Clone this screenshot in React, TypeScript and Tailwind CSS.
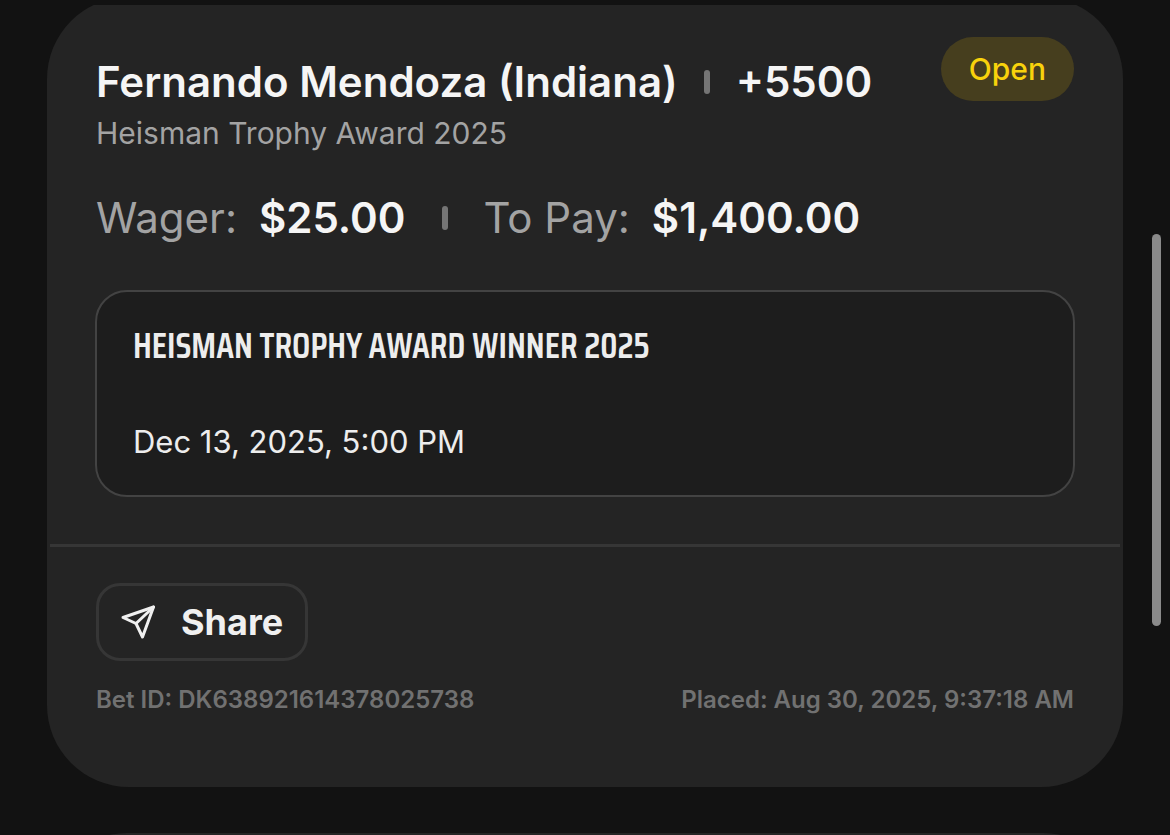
import React, {FC} from "react";

interface Bet {
    selection: string
    odds: string
    market: string
    status: string
    wager: string
    payout: string
    event: string
    startsAt: string
    id: string
    placedAt: string
}

interface BetCardProps {
    bet: Bet
}

const bet: Bet = {
    selection: "Fernando Mendoza (Indiana)",
    odds: "+5500",
    market: "Heisman Trophy Award 2025",
    status: "Open",
    wager: "$25.00",
    payout: "$1,400.00",
    event: "Heisman Trophy Award Winner 2025",
    startsAt: "Dec 13, 2025, 5:00 PM",
    id: "DK638921614378025738",
    placedAt: "Aug 30, 2025, 9:37:18 AM"
}

const Separator: FC = () => (
    <span className="h-6 w-1.5 shrink-0 rounded-sm bg-[#757575]" />
)

const ShareIcon: FC = () => (
    <svg className="h-9 w-9" viewBox="0 0 36 36" fill="none" stroke="currentColor" strokeWidth="3" strokeLinejoin="round" strokeLinecap="round" aria-hidden="true">
        <path d="M32.5 3 2 13.5 15 19.5 21.5 33Z" />
        <path d="M32.5 3 15 19.5" />
    </svg>
)

const BetCard: FC<BetCardProps> = ({bet}) => {
    return (
        <article className="-mt-2 rounded-[82px] bg-[#242424] pt-10 pb-[72px]">
            <div className="px-12">
                <header className="flex items-start justify-between px-px">
                    <div className="pt-5">
                        <div className="flex items-center gap-[26px] text-[42px] leading-[50px] font-semibold text-[#f5f5f5]">
                            <h1>{bet.selection}</h1>
                            <Separator />
                            <span>{bet.odds}</span>
                        </div>
                        <h2 className="mt-2 text-[30px] leading-9 text-[#a3a3a3]">{bet.market}</h2>
                    </div>
                    <span className="rounded-full bg-[#463e1e] px-7 py-3.5 text-[30px] leading-9 font-medium text-[#f8d20c]">
                        {bet.status}
                    </span>
                </header>
                <div className="mt-[42px] flex items-center gap-9 px-px text-[42px] leading-[50px]">
                    <p className="flex gap-[22px]">
                        <span className="text-[#a3a3a3]">Wager:</span>
                        <span className="font-semibold text-[#f5f5f5]">{bet.wager}</span>
                    </p>
                    <Separator />
                    <p className="flex gap-[22px]">
                        <span className="text-[#a3a3a3]">To Pay:</span>
                        <span className="font-semibold text-[#f5f5f5]">{bet.payout}</span>
                    </p>
                </div>
                <section className="mt-[47px] rounded-[32px] border-2 border-[#434343] bg-[#1d1d1d] px-9 pt-8 pb-[35px] text-[#ededed]">
                    <h3 className="font-['Saira_Condensed','Roboto_Condensed','Liberation_Sans_Narrow',sans-serif] text-[36px] leading-11 font-semibold uppercase">
                        {bet.event}
                    </h3>
                    <p className="mt-14 text-[31px] leading-9">{bet.startsAt}</p>
                </section>
            </div>
            <hr className="mx-[3px] mt-[47px] border-t-[3px] border-[#363636]" />
            <footer className="px-[49px] pt-9">
                <button type="button" className="flex h-[78px] items-center gap-6 rounded-3xl border-[3px] border-[#363636] px-[22px] text-[36px] font-bold text-[#f0f0f0]">
                    <ShareIcon />
                    Share
                </button>
                <div className="mt-6 flex justify-between text-[24px] leading-[30px] font-semibold text-[#717171]">
                    <p>Bet ID: {bet.id}</p>
                    <p>Placed: {bet.placedAt}</p>
                </div>
            </footer>
        </article>
    )
}

const App: FC = () => {
    return (
        <div className="relative flex h-screen flex-col overflow-hidden bg-[#121212] pt-[5px] font-['Inter',sans-serif]">
            <main className="flex flex-1 flex-col gap-[46px] overflow-hidden px-[47px]">
                <BetCard bet={bet} />
                <div className="h-40 shrink-0 rounded-[82px] bg-[#242424]" />
            </main>
            <div className="absolute top-[28%] right-[9px] h-[47%] w-[9px] rounded-full bg-[#8a8a8a]" />
        </div>
    )
}

export default App
